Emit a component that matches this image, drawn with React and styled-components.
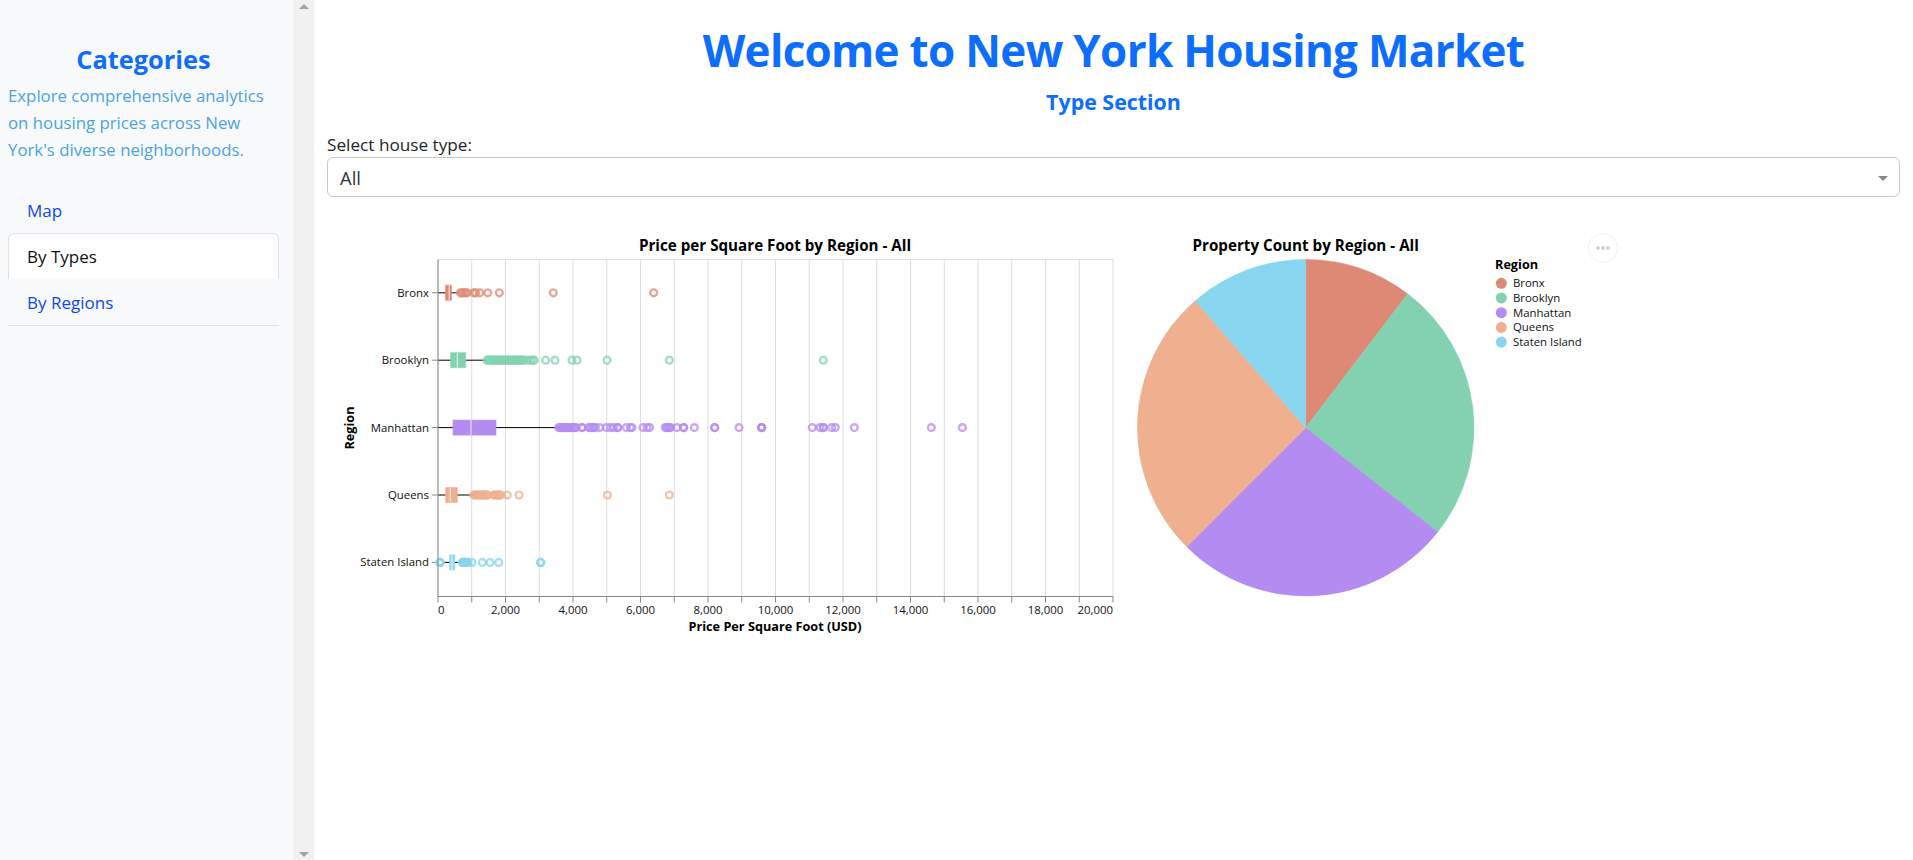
import React from "react";
import styled, { createGlobalStyle } from "styled-components";

const GlobalStyle = createGlobalStyle`
  html, body {
    margin: 0;
    padding: 0;
    height: 100%;
    overflow: hidden;
    background: #fff;
    font-family: "Open Sans", "Liberation Sans", sans-serif;
  }
`;

// Page layout

const Page = styled.div`
  display: flex;
  height: 860px;
`;

const Sidebar = styled.aside`
  width: 293px;
  flex: none;
  box-sizing: border-box;
  padding: 44px 14px 0 8px;
  background: #f8f9fa;
`;

const SideTitle = styled.h2`
  margin: 0 0 7px;
  font-size: 25.4px;
  line-height: 31px;
  font-weight: 700;
  text-align: center;
  color: #0d6efd;
`;

const SideText = styled.p`
  margin: 0 0 24px;
  font-size: 16.8px;
  line-height: 27px;
  color: #4ba3e3;
`;

const NavList = styled.nav`
  display: flex;
  flex-direction: column;
  border-bottom: 1px solid #dee2e6;
`;

const NavItem = styled.a`
  height: 46px;
  box-sizing: border-box;
  padding: 0 18px;
  display: flex;
  align-items: center;
  font-size: 17px;
  text-decoration: none;
  border: 1px solid ${(p) => (p.$active ? "#dee2e6" : "transparent")};
  border-bottom: none;
  border-radius: 6px 6px 0 0;
  background: ${(p) => (p.$active ? "#fff" : "transparent")};
  color: ${(p) => (p.$active ? "#111" : "#0d47f5")};
`;

const ScrollTrack = styled.div`
  width: 21px;
  flex: none;
  box-sizing: border-box;
  padding: 4px 0 3px;
  background: #f1f1f1;
  display: flex;
  flex-direction: column;
  justify-content: space-between;
  align-items: center;
`;

const ScrollArrow = styled.div`
  width: 0;
  height: 0;
  border-left: 5px solid transparent;
  border-right: 5px solid transparent;
  border-${(p) => (p.$down ? "top" : "bottom")}: 5px solid #a3a3a3;
`;

const Main = styled.main`
  flex: 1;
  min-width: 0;
  padding: 0 13px;
`;

const Heading = styled.h1`
  margin: 0;
  padding-top: 19px;
  font-size: 44px;
  line-height: 62px;
  letter-spacing: -0.7px;
  font-weight: 700;
  text-align: center;
  color: #0d6efd;
`;

const SubHeading = styled.h3`
  margin: 5px 0 0;
  font-size: 21.4px;
  line-height: 32px;
  font-weight: 700;
  text-align: center;
  color: #0d6efd;
`;

const FieldLabel = styled.label`
  display: block;
  margin-top: 14px;
  font-size: 17.2px;
  line-height: 25px;
  color: #212529;
`;

const SelectBox = styled.div`
  height: 40px;
  box-sizing: border-box;
  padding: 0 11px 0 12px;
  display: flex;
  align-items: center;
  justify-content: space-between;
  border: 1px solid #c8c8c8;
  border-radius: 6px;
  font-size: 18.4px;
  color: #333;
`;

const Caret = styled.div`
  width: 0;
  height: 0;
  margin-top: 2px;
  border-left: 5px solid transparent;
  border-right: 5px solid transparent;
  border-top: 5px solid #888;
`;

const ChartRow = styled.section`
  display: flex;
  margin-top: 33px;
`;

const PieWrap = styled.div`
  position: relative;
`;

const ActionsButton = styled.div`
  position: absolute;
  top: 3px;
  left: 461px;
  width: 30px;
  height: 30px;
  box-sizing: border-box;
  border: 1px solid #eee;
  border-radius: 50%;
  display: flex;
  align-items: center;
  justify-content: center;
  background: #fff;
`;

// Chart text

const chartFont = `"Open Sans", "Liberation Sans", sans-serif`;

const ChartTitle = styled.text`
  font-family: ${chartFont};
  font-size: 15.2px;
  font-weight: 700;
  fill: #000;
  text-anchor: middle;
`;

const AxisTitle = styled.text`
  font-family: ${chartFont};
  font-size: 12.7px;
  font-weight: 700;
  fill: #000;
  text-anchor: ${(p) => p.$anchor || "middle"};
`;

const TickLabel = styled.text`
  font-family: ${chartFont};
  font-size: 11.4px;
  fill: #111;
  text-anchor: ${(p) => p.$anchor || "middle"};
`;

// Data

const range = (from, to, step) => {
  const out = [];
  for (let v = from; v <= to; v += step) out.push(v);
  return out;
};

const REGIONS = [
  {
    name: "Bronx",
    color: "#de8876",
    box: [225, 330, 400],
    whisker: [0, 620],
    outliers: [...range(662, 909, 50), 1057, 1116, 1235, 1472, 1817, 3417, 6390],
  },
  {
    name: "Brooklyn",
    color: "#83d1b1",
    box: [375, 573, 820],
    whisker: [0, 1452],
    outliers: [...range(1452, 2538, 45), 2637, 2736, 2795, 2854, 3190, 3467, 3970, 4119, 5008, 6855, 11417],
  },
  {
    name: "Manhattan",
    color: "#b48cf1",
    box: [444, 978, 1719],
    whisker: [0, 3625],
    outliers: [
      ...range(3575, 4119, 40), 4267, 4267, ...range(4464, 4711, 50), 4790, 4988, 5106, 5205, 5324, 5324,
      5580, 5699, 5748, 6074, 6193, 6272, ...range(6736, 6934, 40), 7082, 7279, 7279, 7595,
      8198, 8198, 8919, 9590, 9590, 9590, 11090, 11317, 11416, 11416, 11663, 11771, 12335, 14618, 15536,
    ],
  },
  {
    name: "Queens",
    color: "#eeb08f",
    box: [227, 365, 573],
    whisker: [0, 1106],
    outliers: [...range(1057, 1501, 35), ...range(1650, 1867, 35), 2054, 2400, 5018, 6855],
  },
  {
    name: "Staten Island",
    color: "#88d6f0",
    box: [346, 415, 494],
    whisker: [119, 760],
    outliers: [59, 59, 59, ...range(711, 909, 30), 1007, 1314, 1541, 1798, 3042, 3042],
  },
];

// Box plot

const PLOT = { left: 111, top: 29.5, width: 675, height: 337 };
const scaleX = (v) => PLOT.left + (v / 20000) * PLOT.width;
const bandY = (i) => PLOT.top + 33.3 + i * 67.4;
const formatTick = (v) => v.toLocaleString("en-US");

const BoxPlot = () => {
  const bottom = PLOT.top + PLOT.height;
  const thousands = range(0, 20000, 1000);
  const labelled = range(0, 20000, 2000);

  return (
    <svg width="800" height="410" style={{ flex: "none", display: "block" }}>
      <ChartTitle x="448" y="21">Price per Square Foot by Region - All</ChartTitle>

      {thousands.map((v) => (
        <line key={v} x1={scaleX(v)} x2={scaleX(v)} y1={PLOT.top} y2={bottom} stroke="#ddd" />
      ))}
      <line x1={PLOT.left} x2={PLOT.left + PLOT.width} y1={PLOT.top} y2={PLOT.top} stroke="#ddd" />

      {REGIONS.map((r, i) => {
        const y = bandY(i);
        return (
          <g key={r.name}>
            <line x1={PLOT.left - 6} x2={PLOT.left} y1={y} y2={y} stroke="#888" />
            <TickLabel x={PLOT.left - 9} y={y + 4} $anchor="end">{r.name}</TickLabel>
            <line x1={scaleX(r.whisker[0])} x2={scaleX(r.whisker[1])} y1={y} y2={y} stroke="#000" />
            <rect
              x={scaleX(r.box[0])}
              y={y - 7.5}
              width={scaleX(r.box[2]) - scaleX(r.box[0])}
              height="15"
              fill={r.color}
              stroke={r.color}
              strokeOpacity="0.6"
            />
            <line
              x1={scaleX(r.box[1])}
              x2={scaleX(r.box[1])}
              y1={y - 7.5}
              y2={y + 7.5}
              stroke="#fff"
              strokeOpacity="0.7"
              strokeWidth="1.2"
            />
            {r.outliers.map((v, j) => (
              <circle
                key={j}
                cx={scaleX(v)}
                cy={y}
                r="3.4"
                fill="none"
                stroke={r.color}
                strokeOpacity="0.75"
                strokeWidth="2.4"
              />
            ))}
          </g>
        );
      })}

      <line x1={PLOT.left} x2={PLOT.left} y1={PLOT.top} y2={bottom} stroke="#888" />
      <line x1={PLOT.left} x2={PLOT.left + PLOT.width} y1={bottom} y2={bottom} stroke="#888" />

      {thousands.map((v) => (
        <line key={v} x1={scaleX(v)} x2={scaleX(v)} y1={bottom} y2={bottom + 6} stroke="#888" />
      ))}
      {labelled.map((v) => {
        const anchor = v === 0 ? "start" : v === 20000 ? "end" : "middle";
        return (
          <TickLabel key={v} x={scaleX(v)} y={bottom + 17.5} $anchor={anchor}>
            {formatTick(v)}
          </TickLabel>
        );
      })}

      <AxisTitle x="448" y="401">Price Per Square Foot (USD)</AxisTitle>
      <AxisTitle transform="translate(27 198) rotate(-90)">Region</AxisTitle>
    </svg>
  );
};

// Pie chart

const PIE = { cx: 178.7, cy: 197.7, r: 168.3 };
const SLICE_ENDS = [37.3, 128.3, 225, 319, 360];

const slicePath = (from, to) => {
  const point = (deg) => {
    const a = (deg * Math.PI) / 180;
    return `${PIE.cx + PIE.r * Math.sin(a)} ${PIE.cy - PIE.r * Math.cos(a)}`;
  };
  const large = to - from > 180 ? 1 : 0;
  return `M${PIE.cx} ${PIE.cy}L${point(from)}A${PIE.r} ${PIE.r} 0 ${large} 1 ${point(to)}Z`;
};

const PieChart = () => (
  <PieWrap>
    <svg width="500" height="410" style={{ display: "block" }}>
      <ChartTitle x="178.7" y="21">Property Count by Region - All</ChartTitle>
      {REGIONS.map((r, i) => (
        <path
          key={r.name}
          d={slicePath(i === 0 ? 0 : SLICE_ENDS[i - 1], SLICE_ENDS[i])}
          fill={r.color}
          stroke={r.color}
          strokeWidth="0.5"
        />
      ))}
      <AxisTitle x="368" y="38.5" $anchor="start">Region</AxisTitle>
      {REGIONS.map((r, i) => (
        <g key={r.name}>
          <circle cx="374.3" cy={53.3 + i * 14.7} r="5.5" fill={r.color} />
          <TickLabel x="386" y={57.3 + i * 14.7} $anchor="start">{r.name}</TickLabel>
        </g>
      ))}
    </svg>
    <ActionsButton>
      <svg width="14" height="4" viewBox="0 0 14 4">
        <circle cx="2" cy="2" r="1.8" fill="#ccc" />
        <circle cx="7" cy="2" r="1.8" fill="#ccc" />
        <circle cx="12" cy="2" r="1.8" fill="#ccc" />
      </svg>
    </ActionsButton>
  </PieWrap>
);

export default function App() {
  return (
    <>
      <GlobalStyle />
      <Page>
        <Sidebar>
          <SideTitle>Categories</SideTitle>
          <SideText>
            Explore comprehensive analytics on housing prices across New York's diverse neighborhoods.
          </SideText>
          <NavList>
            <NavItem href="#map">Map</NavItem>
            <NavItem href="#types" $active>By Types</NavItem>
            <NavItem href="#regions">By Regions</NavItem>
          </NavList>
        </Sidebar>
        <ScrollTrack>
          <ScrollArrow />
          <ScrollArrow $down />
        </ScrollTrack>
        <Main>
          <Heading>Welcome to New York Housing Market</Heading>
          <SubHeading>Type Section</SubHeading>
          <FieldLabel>Select house type:</FieldLabel>
          <SelectBox>
            <span>All</span>
            <Caret />
          </SelectBox>
          <ChartRow>
            <BoxPlot />
            <PieChart />
          </ChartRow>
        </Main>
      </Page>
    </>
  );
}
